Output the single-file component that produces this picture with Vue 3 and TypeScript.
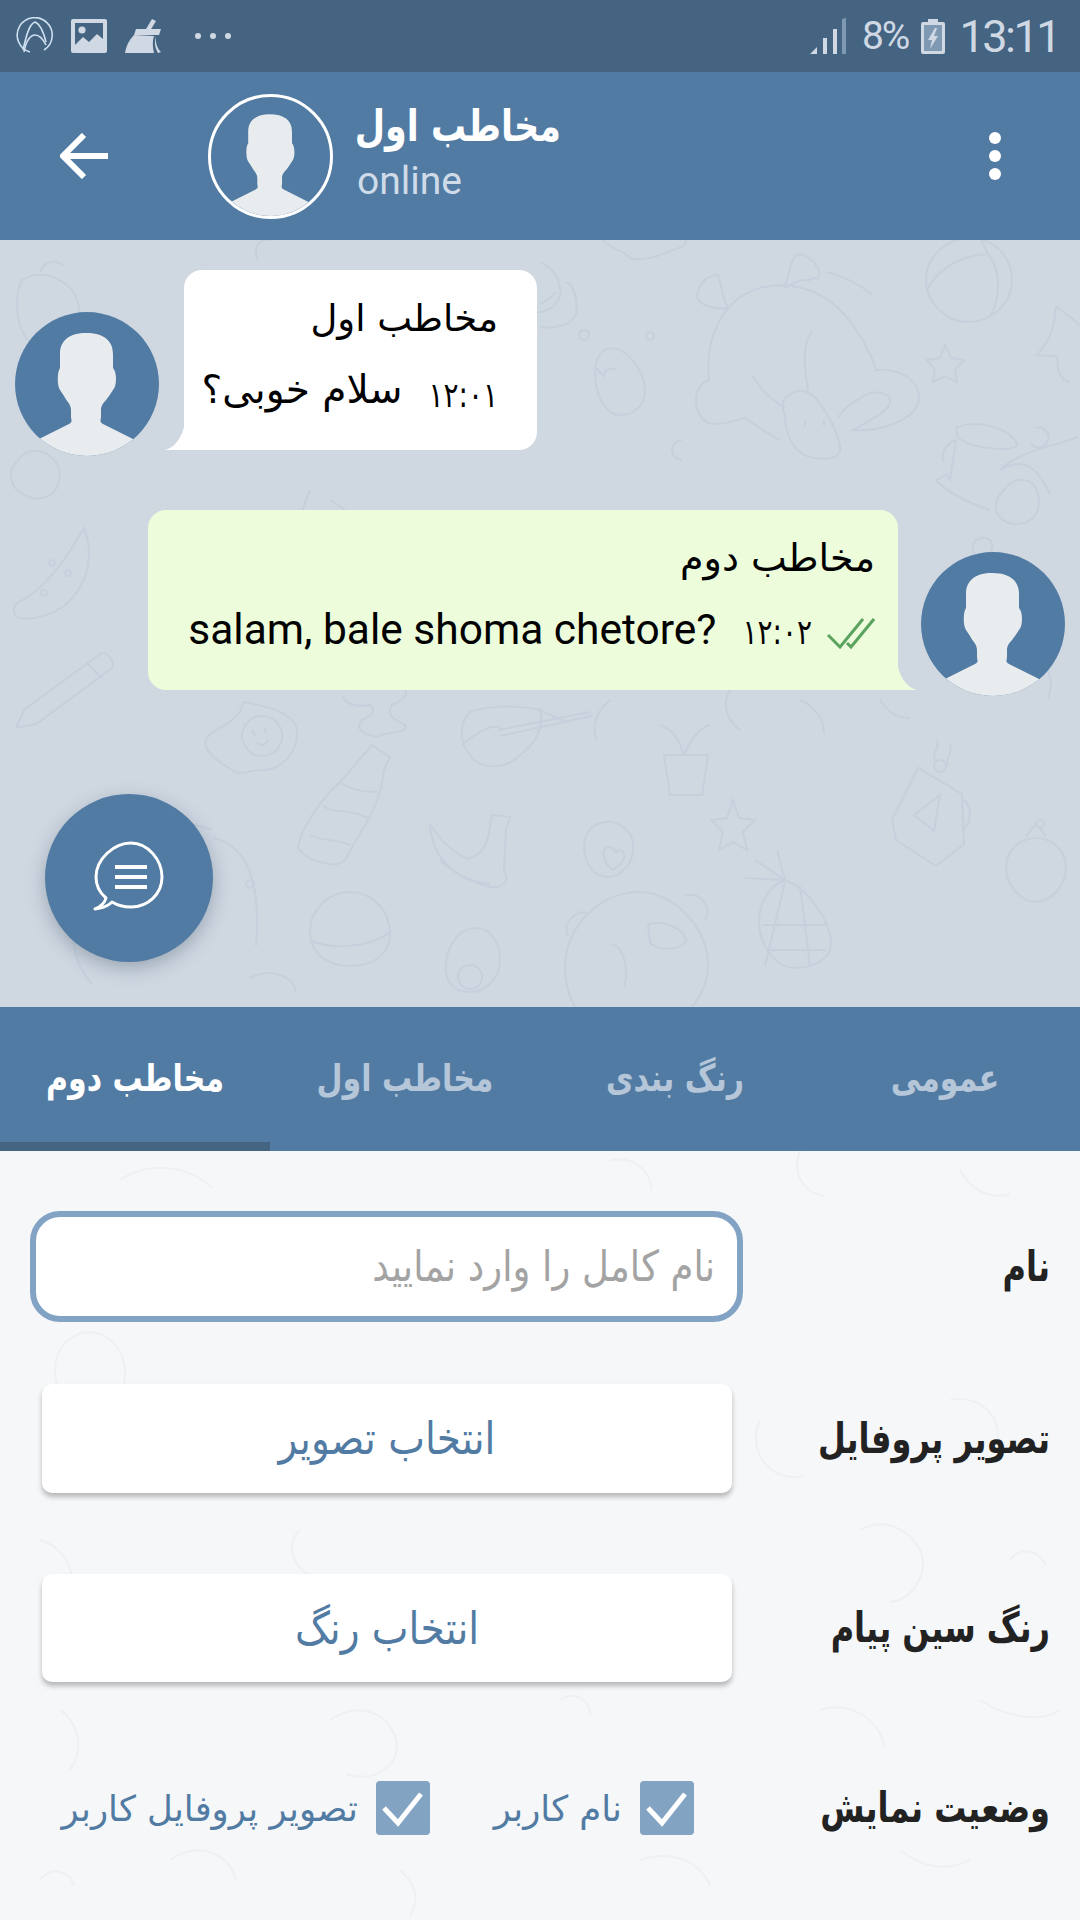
<script setup lang="ts">
const tabs = [
  { label: 'عمومی', active: false },
  { label: 'رنگ بندی', active: false },
  { label: 'مخاطب اول', active: false },
  { label: 'مخاطب دوم', active: true },
]
const silhouette =
  'M71 21C55 21 45 28 45 42L45 56C42 60 42 74 45 78L49 84C52 90 56 92 56 98L56 104C56 108 58 110 54 112L24 127V144H118V127L88 112C84 110 86 108 86 104L86 98C86 92 90 90 94 84L98 78C102 74 102 60 98 56L98 42C98 28 88 21 71 21Z'
const chatDoodles = [
  // sun egg, bottle, guitar
  'M243 702C262 705 295 712 297 730C298 755 280 770 262 770C250 770 242 775 235 772C225 765 205 755 205 742C208 730 228 728 240 712Z M262 716a20 20 0 1 0 .1 0 M252 730l3 6 M264 728l2 5 M256 742c4 4 10 4 12 -2',
  'M372 745L390 757L384 770C382 790 375 810 362 830L345 860C335 870 305 860 298 848C300 830 320 800 340 782L372 745Z M340 782C350 790 365 792 378 792 M322 805C335 815 350 808 368 818 M310 835C322 842 335 838 350 845',
  'M378 737C385 730 410 735 405 725C395 720 385 715 392 705C405 700 412 690 400 688 M378 737C362 735 355 728 362 720C370 716 378 712 370 705C352 708 340 700 345 695',
  'M470 712C490 705 520 705 540 710C545 725 535 745 520 755C505 770 480 770 470 755C458 740 460 722 470 712Z M498 730L590 712 M500 736L592 716 M462 745C480 730 490 725 500 727 M540 710C560 720 570 725 575 718',
  // banana, star, mug, strawberry
  'M430 825c2 30 20 52 60 62 14 2 20-8 14-16l2-42 4-12-18-2-2 10c-2 20-8 30-22 34-14-6-28-20-38-34z M440 860c14 14 30 22 50 24',
  'M733 800l6 18 16 2-12 12 4 18-14-8-14 8 4-18-12-12 16-2z',
  'M892 820l26-52 44 26 2 50-28 22-40-26z M914 815l26-20-6 36z M964 800c10 8 6 26-2 30 M935 760c-4-8 6-12 2-20 M948 765c-4-8 6-12 2-20',
  'M1036 838c18 0 30 14 30 30s-14 34-30 34-30-18-30-34 12-30 30-30z M1026 836l10-12 10 12 M1022 860h.1 M1040 855h.1 M1050 875h.1 M1030 880h.1',
  // pineapple, burger, avocado, bear, plant, heart avocado
  'M785 880c26 10 46 44 46 64 0 14-16 24-36 24s-36-24-36-46c0-20 10-36 26-42z M762 925l66 0 M768 950l58 0 M785 882l-20 84 M800 886l10 80 M785 880l-30-20 M785 880l-8-30 M785 880l-40-2',
  'M350 892c24 0 40 20 40 42 0 20-16 32-40 32s-40-14-40-34 16-40 40-40z M310 940c20 10 60 8 80-8 M330 910h.1 M350 905h.1 M365 918h.1',
  'M476 928c16 0 24 16 24 32s-12 32-30 32-26-12-24-30 14-34 30-34z M470 965a12 12 0 1 0 .1 0',
  'M640 892c32 0 68 34 68 74 0 18-8 30-16 41 M640 892c-40 0-75 34-75 76 0 15 4 28 10 39 M568 935c-6-12 8-26 20-22 M705 920c8-14-6-30-20-24 M648 925c12-6 34 2 38 14 0 10-24 14-36 4z M612 945c10 0 18 24 12 42',
  'M664 755l44 0-6 40-32 0z M684 755c-4-12-8-24-24-30 M684 755c6-14 16-28 26-30',
  'M595 825c22-10 40 6 38 26-2 20-20 30-34 24-16-8-22-38-4-50z M604 850c4-6 10-2 12 2 4-4 10 0 8 6-2 6-8 10-12 12-4-4-10-12-8-20z',
  // top right: cloud, cup, egg, dino, star, ball, jar
  'M603 240C610 250 625 250 630 258C645 262 660 255 672 250C682 248 688 244 686 238',
  'M566 282C574 285 578 300 576 314C572 326 550 330 540 326 M556 292C550 298 545 302 540 304',
  'M613 348C630 350 646 375 645 392C644 408 632 415 620 415C605 415 595 395 595 372C595 358 602 348 613 348Z M596 368l8 8 2-6 10-2',
  'M709 380C705 340 720 300 760 288C790 280 820 290 840 310C855 325 870 350 876 370C900 368 920 380 919 400C916 420 880 432 853 430C870 420 892 410 890 400C888 390 870 392 865 395C855 402 845 405 838 418 M709 380C690 385 692 420 712 424C725 425 735 420 745 418C755 425 770 435 780 440 M812 332C800 345 806 375 808 392 M752 375C760 390 772 400 785 408',
  'M785 415C775 395 800 385 812 395C825 405 842 440 840 452C835 462 810 460 800 452C790 445 785 430 785 415Z M805 420v6 M824 420v6',
  'M784 288C790 275 790 255 800 254C815 258 822 272 818 278C812 278 808 282 800 280C795 282 790 286 784 288Z M728 308C715 310 697 305 697 295C700 280 710 275 718 275C722 285 722 300 728 308Z M826 272C840 275 862 285 872 295',
  'M945 345l6 13 13 2-9 10 2 12-12-6-12 6 2-12-8-10 13-2z',
  'M970 238C995 238 1012 258 1012 280C1012 305 990 322 968 322C945 322 926 302 926 280C926 258 945 238 970 238Z M927 290C940 265 965 255 988 254 M988 254C1002 270 1000 300 990 316 M988 254L980 238',
  'M1056 306L1080 325 M1056 306C1054 330 1050 340 1037 355C1045 358 1056 352 1058 360C1056 370 1062 382 1070 382',
  'M956 428C975 418 1012 428 1017 445C1015 452 975 450 958 438Z M955 440C945 445 940 455 944 462 M956 440L950 480C945 470 944 478 936 480C950 495 975 505 990 510 M1000 470C1020 450 1060 445 1078 437 M1000 470C1025 455 1040 470 1050 495',
  'M682 440a10 10 0 1 0 .1 20 M1035 428a10 10 0 1 1 -4 16',
  // left: watermelon, pencil, blobs
  'M84 528c10 24 6 56-20 78-12 8-28 14-44 12-6-2-8-8-4-14 24-12 48-40 68-76z M52 560a3 3 0 1 0 .1 0 M68 570a3 3 0 1 0 .1 0 M44 590a3 3 0 1 0 .1 0',
  'M100 654l-76 56-8 18 20-4 76-56c4-6-6-18-12-14z M88 664l14 14',
  'M22 280c18-10 34-4 46 6s16 34 6 56c-16 12-36 10-48-4-10-14-12-42-4-58z M40 272c4-10 14-14 24-6',
  'M280 300c10-16 20-22 30-16 M258 260c-6-14 2-22 14-20 M540 262c14 6 22 20 20 34-4 12-16 18-30 16',
  'M18 460c8-12 26-12 36 0s6 30-6 36-28 0-34-10-4-18 4-26z M310 490c-10 24-20 60-30 90 M330 500c14 8 30 20 38 38',
  'M112 840c30-26 66-22 100-10 M214 838c40 10 46 60 42 108 M80 912c-14 20-4 56 12 72 M250 978c24-12 44 0 46 14',
  'M1004 490c12-16 30-12 34 4s-4 30-22 30-28-18-12-34z M980 560c-10-8-10-20 2-22s14 14 4 18 M584 330a5 5 0 1 0 .1 0 M650 332a4 4 0 1 0 .1 0 M940 760a6 6 0 1 0 .1 0 M1040 820a4 4 0 1 0 .1 0 M250 880a4 4 0 1 0 .1 0',
  // between bubbles
  'M730 690c-8 14-4 30 10 40 M800 700c14 6 24 18 24 34 M610 700c-14 12-18 26-14 40 M880 700c8 12 16 18 30 18 M1040 660c10 10 14 24 8 38',
]
const formDoodles = [
  'M120 1180c30-20 70-14 92 8 M610 1160c24-4 40 10 42 30 M800 1150c-10 28 8 44 24 46 M960 1170c10 20 30 30 50 24',
  'M60 1350c-14 26 2 60 30 62s44-34 30-60-46-26-60-2z M370 1400c24-26 60-14 70 10s-10 56-34 54-50-40-36-64z M760 1420c-14 30 10 64 44 56 M950 1400c30-6 50 16 48 40',
  'M860 1530c24-14 50 0 60 20s-6 50-30 52 M1010 1560c10-14 30-10 36 6 M40 1540c30 10 40 40 24 66 M300 1530c-14 14-8 36 8 44',
  'M330 1720c30-20 60-6 66 20s-24 44-50 34 M820 1710c30-10 60 10 64 36 M980 1700c24 16 60 24 80 10 M60 1710c20 14 24 40 10 60 M560 1700c14-10 30 0 30 14',
  'M170 1860c30-20 60-6 66 20 M640 1860c30-10 60 0 70 26 M900 1850c26 20 50 20 70 10 M400 1870c16 14 20 30 10 46 M40 1880c10-14 30-10 34 6',
]
</script>

<template>
  <div class="page">
    <div class="statusbar">
      <div class="status-left">
        <svg class="st-a" viewBox="0 0 38 38" fill="none" stroke="#cfe0f0" stroke-width="1.6">
          <path d="M28 33A17.5 17.5 0 1 0 14 35" />
          <path d="M7 33C10 20 13 7 19 5c5 2 9 12 11 20" />
          <path d="M8 35c2-12 7-17 11-17s8 4 11 10" />
        </svg>
        <svg class="st-img" viewBox="0 0 36 34">
          <path fill="#cfd8e3" fill-rule="evenodd" d="M2 0H34a2 2 0 0 1 2 2V32a2 2 0 0 1-2 2H2a2 2 0 0 1-2-2V2a2 2 0 0 1 2-2ZM4 4V26l8-8 6 5 8-8 6 5V4Z" />
          <circle cx="11" cy="11" r="3.6" fill="#cfd8e3" />
        </svg>
        <svg class="st-broom" viewBox="0 0 38 36" fill="#cfd8e3">
          <path d="M27 1L31 3L25 13L21 11Z" />
          <path d="M11 11L36 11L34 17L9 17Z" />
          <path d="M9 17L29 18C27 24 28 30 29 35L0 35C1 28 4 22 9 17Z" />
          <path d="M31 18C30 24 32 30 36 34L33 35C30 30 29 24 31 18Z" />
        </svg>
        <div class="st-dots"><i /><i /><i /></div>
      </div>
      <div class="status-right">
        <svg class="st-signal" viewBox="0 0 36 36">
          <path fill="#cfd8e3" d="M0 36L7 29V36ZM13 36V20H17V36ZM23 36V11H27V36Z" />
          <path fill="#8099b3" d="M32 36V1L36 0V36Z" />
        </svg>
        <span class="st-pct">8%</span>
        <svg class="st-batt" viewBox="0 0 24 35">
          <path fill="#cfd8e3" d="M7 0H17V3H22a2 2 0 0 1 2 2V33a2 2 0 0 1-2 2H2a2 2 0 0 1-2-2V5a2 2 0 0 1 2-2H7Z" />
          <rect x="3" y="6" width="18" height="26" fill="#8099b3" />
          <path fill="#cfd8e3" d="M14 9L7 21H11L9 30L17 17H13L16 9Z" />
        </svg>
        <span class="st-time">13:11</span>
      </div>
    </div>

    <header class="topbar">
      <svg class="back" viewBox="0 0 48 46" fill="none" stroke="#fff" stroke-width="6">
        <path d="M48 23H4M24 2L3 23L24 44" />
      </svg>
      <svg class="head-avatar" viewBox="0 0 144 144">
        <path :d="silhouette" fill="#e8ecee" />
      </svg>
      <div class="who">
        <div class="who-name" dir="rtl">مخاطب اول</div>
        <div class="who-state">online</div>
      </div>
      <div class="menu"><i /><i /><i /></div>
    </header>

    <section class="chat">
      <svg class="doodles" viewBox="0 240 1080 767" fill="none" stroke="#c6d0dc" stroke-width="2">
        <path v-for="(d, i) in chatDoodles" :key="i" :d="d" />
      </svg>

      <div class="msg-row">
        <svg class="avatar" viewBox="0 0 144 144">
          <rect width="144" height="144" fill="#517ba3" />
          <path :d="silhouette" fill="#e8ecee" />
        </svg>
        <div class="bubble bubble-in">
          <div class="b-name">مخاطب اول</div>
          <div class="b-line">
            <span class="b-time">۱۲:۰۱</span>
            <span class="b-text">سلام خوبی؟</span>
          </div>
          <svg class="tail tail-in" viewBox="0 0 20 28"><path d="M20 0V28H0C10 26 18 14 20 0Z" fill="#fff" /></svg>
        </div>
      </div>

      <div class="msg-row msg-out">
        <div class="bubble bubble-sent">
          <div class="b-name">مخاطب دوم</div>
          <div class="b-line">
            <svg class="ticks" viewBox="0 0 48 32" fill="none" stroke="#5aa35f" stroke-width="3">
              <path d="M1 18L13 30L36 2M20 26L24 30L47 2" />
            </svg>
            <span class="b-time">۱۲:۰۲</span>
            <span class="b-text en" dir="ltr">salam, bale shoma chetore?</span>
          </div>
          <svg class="tail tail-out" viewBox="0 0 20 28"><path d="M0 0V28H20C10 26 2 14 0 0Z" fill="#edfcdb" /></svg>
        </div>
        <svg class="avatar" viewBox="0 0 144 144">
          <rect width="144" height="144" fill="#517ba3" />
          <path :d="silhouette" fill="#e8ecee" />
        </svg>
      </div>

      <button class="fab">
        <svg viewBox="0 0 76 76" fill="none" stroke="#fff" stroke-width="3">
          <path d="M9 68C14 67 18 65 21 62C26 65 32 67 40 67C57 67 71 54 71 37S57 3 40 3S5 19 5 37C5 46 9 53 15 58C14 62 11 66 4 69C5 69 7 69 9 68Z" stroke-linejoin="round" />
          <path d="M24 27H56M24 37H56M24 47H56" stroke-width="4" />
        </svg>
      </button>
    </section>

    <nav class="tabs" dir="rtl">
      <div v-for="t in tabs" :key="t.label" class="tab" :class="{ active: t.active }"><span>{{ t.label }}</span></div>
    </nav>

    <main class="form" dir="rtl">
      <svg class="doodles" viewBox="0 1151 1080 769" fill="none" stroke="#eef1f4" stroke-width="2">
        <path v-for="(d, i) in formDoodles" :key="i" :d="d" />
      </svg>

      <div class="row row-name">
        <label class="lbl">نام</label>
        <div class="field"><span>نام کامل را وارد نمایید</span></div>
      </div>
      <div class="row row-pic">
        <label class="lbl">تصویر پروفایل</label>
        <button class="pick"><span>انتخاب تصویر</span></button>
      </div>
      <div class="row row-color">
        <label class="lbl">رنگ سین پیام</label>
        <button class="pick"><span>انتخاب رنگ</span></button>
      </div>
      <div class="row row-show">
        <label class="lbl">وضعیت نمایش</label>
        <div class="checks">
          <div class="check check-user">
            <span class="box">
              <svg viewBox="0 0 54 54" fill="none" stroke="#fff" stroke-width="5"><path d="M8 27L22 42L45 13" /></svg>
            </span>
            <span class="check-text">نام کاربر</span>
          </div>
          <div class="check">
            <span class="box">
              <svg viewBox="0 0 54 54" fill="none" stroke="#fff" stroke-width="5"><path d="M8 27L22 42L45 13" /></svg>
            </span>
            <span class="check-text">تصویر پروفایل کاربر</span>
          </div>
        </div>
      </div>
    </main>
  </div>
</template>

<style>
html, body { margin: 0; background: #f5f7f9; }
</style>

<style scoped>
.page {
  width: 1080px; height: 1920px; overflow: hidden;
  display: flex; flex-direction: column;
  font-family: "DejaVu Sans", "Noto Sans", sans-serif;
}
.statusbar {
  height: 72px; flex-shrink: 0; background: #446482; color: #cfd8e3;
  display: flex; align-items: center; justify-content: space-between;
  padding: 0 21px 0 16px;
}
.status-left { display: flex; align-items: center; }
.st-a { width: 38px; height: 38px; }
.st-img { width: 36px; height: 34px; margin-left: 17px; }
.st-broom { width: 38px; height: 36px; margin-left: 18px; }
.st-dots { display: flex; gap: 9px; margin-left: 32px; }
.st-dots i { width: 6px; height: 6px; border-radius: 50%; background: #cfd8e3; }
.status-right { display: flex; align-items: center; font-family: Roboto, sans-serif; font-weight: 400; }
.st-signal { width: 36px; height: 36px; margin-right: 16px; }
.st-pct { font-size: 39px; letter-spacing: -2px; margin-right: 13px; }
.st-batt { width: 24px; height: 35px; margin-right: 14px; }
.st-time { font-size: 45px; letter-spacing: -2.5px; }

.topbar {
  height: 168px; flex-shrink: 0; background: #517ba3; position: relative;
  display: flex; align-items: center; padding: 0 79px 0 60px;
}
.back { width: 48px; height: 46px; }
.head-avatar {
  width: 125px; height: 125px; margin-left: 100px; box-sizing: border-box;
  border: 3px solid #fff; border-radius: 50%;
}
.who { margin-left: 24px; flex: 1; margin-top: -10px; }
.who-name {
  color: #fff; font-size: 35px; font-weight: 700; line-height: 60px; text-align: right; width: 204px;
  white-space: nowrap; transform: scaleY(1.25);
}
.who-state { color: #cfdbe8; font-family: Roboto, sans-serif; font-size: 39px; line-height: 50px; }
.menu { display: flex; flex-direction: column; gap: 6px; }
.menu i { width: 12px; height: 12px; border-radius: 50%; background: #fff; }

.chat {
  height: 767px; flex-shrink: 0; background: #cfd7e1; position: relative; overflow: hidden;
  padding: 30px 15px 0; box-sizing: border-box;
}
.doodles { position: absolute; left: 0; top: 0; width: 1080px; height: 100%; }
.msg-row { display: flex; align-items: flex-end; position: relative; height: 180px; }
.msg-row .avatar { margin-bottom: -6px; }
.msg-out { justify-content: flex-end; margin-top: 60px; }
.avatar { width: 144px; height: 144px; border-radius: 50%; flex-shrink: 0; }
.bubble {
  position: relative; height: 180px; box-sizing: border-box; border-radius: 18px; direction: rtl;
  color: #000;
}
.bubble-in { width: 353px; margin-left: 25px; background: #fff; padding: 26px 39px 0 12px; border-bottom-left-radius: 0; }
.bubble-sent { width: 750px; margin-right: 23px; background: #edfcdb; padding: 25px 23px 0 12px; border-bottom-right-radius: 0; }
.b-name { font-size: 37px; line-height: 46px; }
.bubble-sent .b-name { font-size: 38px; }
.b-line { display: flex; align-items: center; margin-top: 25px; }
.bubble-sent .b-line { margin-top: 24px; }
.b-time { font-size: 28px; margin-top: 12px; transform: scaleY(1.25); }
.bubble-sent .b-time { margin-top: 6px; }
.b-text { font-size: 39px; margin-right: 26px; white-space: nowrap; }
.b-text.en { font-family: Roboto, sans-serif; font-size: 42.5px; }
.ticks { width: 48px; height: 32px; margin-left: 15px; margin-top: 6px; }
.tail { position: absolute; bottom: 0; width: 20px; height: 28px; }
.tail-in { left: -19px; }
.tail-out { right: -19px; }

.fab {
  position: absolute; left: 45px; top: 554px; width: 168px; height: 168px; border: 0; border-radius: 50%;
  background: #517ba3; box-shadow: 0 6px 18px rgba(60, 80, 100, .35); padding: 0;
  display: flex; align-items: center; justify-content: center;
}
.fab svg { width: 76px; height: 76px; }

.tabs {
  height: 144px; flex-shrink: 0; background: #517ba3;
  display: grid; grid-template-columns: repeat(4, 1fr);
}
.tab {
  display: flex; align-items: center; justify-content: center; box-sizing: border-box;
  padding-top: 5px; border-bottom: 9px solid transparent;
  font-size: 30px; font-weight: 700; color: #b5c6d9;
}
.tab span { transform: scaleY(1.25); }
.tab.active { color: #fff; border-bottom-color: #446482; }

.form { flex: 1; background: #f5f7f9; position: relative; padding: 0 30px; }
.row { display: flex; align-items: center; justify-content: space-between; position: relative; }
.row-name { margin-top: 60px; height: 111px; }
.row-pic { margin-top: 62px; height: 109px; padding-left: 12px; }
.row-color { margin-top: 81px; height: 108px; padding-left: 12px; }
.row-show { margin-top: 99px; height: 54px; }
.lbl { font-size: 32px; font-weight: 700; color: #222; white-space: nowrap; transform: scaleY(1.3); }
.field {
  width: 713px; height: 111px; box-sizing: border-box; border: 6px solid #82a3c3; border-radius: 30px;
  background: #fff; color: #a3a3a3; font-size: 37px; display: flex; align-items: center; padding: 0 22px;
}
.field span { transform: scaleY(1.15); }
.pick {
  width: 690px; height: 100%; border: 0; border-radius: 10px; background: #fff;
  box-shadow: 0 4px 5px rgba(90, 90, 90, .4); padding: 0;
  font-family: inherit; font-size: 39px; color: #517ba3;
}
.pick span { display: inline-block; transform: scaleY(1.15); }
.checks { display: flex; align-items: center; width: 664px; }
.check { display: flex; align-items: center; gap: 18px; }
.check-user { width: 264px; }
.box { width: 54px; height: 54px; border-radius: 4px; background: #83a3c3; flex-shrink: 0; }
.box svg { width: 54px; height: 54px; display: block; }
.check-text { font-size: 35.5px; color: #517ba3; white-space: nowrap; }
</style>
